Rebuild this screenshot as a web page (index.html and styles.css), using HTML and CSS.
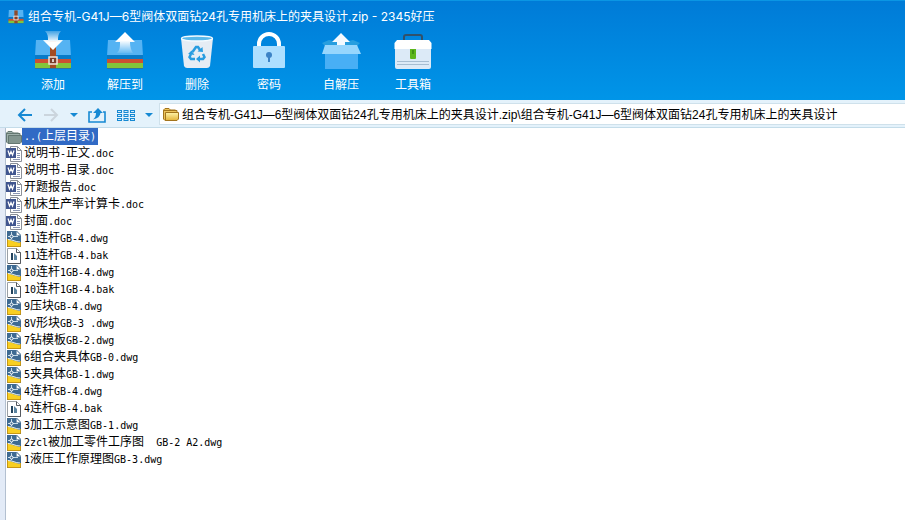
FILE: index.html
```html
<!DOCTYPE html>
<html lang="zh-CN">
<head>
<meta charset="utf-8">
<title>2345好压</title>
<link rel="stylesheet" href="styles.css">
</head>
<body>
<svg class="defs" aria-hidden="true">
  <defs>
    <linearGradient id="arrow" x1="0" y1="0" x2="0" y2="1"><stop offset="0" stop-color="#fff" stop-opacity=".25"/><stop offset=".6" stop-color="#fff"/></linearGradient>
    <linearGradient id="arrowUp" x1="0" y1="0" x2="0" y2="1"><stop offset=".4" stop-color="#fff"/><stop offset="1" stop-color="#fff" stop-opacity=".1"/></linearGradient>
    <linearGradient id="yellow" x1="0" y1="0" x2="0" y2="1"><stop offset="0" stop-color="#fff3a8"/><stop offset="1" stop-color="#e3b238"/></linearGradient>
    <symbol id="archive" viewBox="0 0 38 30" preserveAspectRatio="none">
      <path d="M2 0H36L37 16H1z" fill="#55b3f3"/><path d="M1 15H37V20H1z" fill="#087ac8"/>
      <path d="M1 19H37V24H1z" fill="#cc5033"/><path d="M1 23H37V28H1z" fill="#82c63b"/><path d="M1 28H37V29H1z" fill="#30739a"/>
    </symbol>
    <symbol id="doc" viewBox="0 0 16 16">
      <path d="M4.500 .5H11.500L15.500 4.500V15.500H4.500z" fill="#fff" stroke="#8c9099"/><path d="M11.500 .5V4.500H15.500" fill="none" stroke="#8c9099"/>
      <path d="M11 7.500H14M11 9.500H14M11 11.500H14M7 13.500H14" stroke="#8c97b5"/>
      <path d="M0 2H10V12H0z" fill="#40558f"/><path d="M2 4.500L3.500 9L5 5.500L6.500 9L8 4.500" fill="none" stroke="#fff" stroke-width="1.200"/>
    </symbol>
    <symbol id="dwg" viewBox="0 0 16 16">
      <path d="M1 0H11L15 4V16H1z" fill="#3e6a92"/>
      <path d="M2 9C6 9 8 11 14 12V15H2z" fill="#f8cf22"/><path d="M2 8.500C7 8.500 9 11 14 11" fill="none" stroke="#e6eff3"/>
      <path d="M1.500 8V15.500H14.500V11" fill="none" stroke="#c79713"/>
      <path d="M5.500 1V8M2 5.500H12" stroke="#c4dbea"/><circle cx="5.500" cy="5.500" r="1.500" fill="#3e6a92" stroke="#fff"/><path d="M10.500 .5V4.500H14.500z" fill="#fff" stroke="#7893aa" stroke-width=".5"/>
    </symbol>
    <symbol id="bak" viewBox="0 0 16 16">
      <path d="M1.500 .5H10.500L14.500 4.500V15.500H1.500z" fill="#fff" stroke="#9aa0a6"/><path d="M10.500 .5V4.500H14.500V15.500H2" fill="none" stroke="#55595f"/>
      <path d="M5 5H7V12H5z" fill="#23435d"/><path d="M8 5L11 8V12H8z" fill="#5c84a0"/>
    </symbol>
    <symbol id="folder" viewBox="0 0 16 16">
      <path d="M.5 4L2 2.500H6L7.500 4H12.500V6H.5z" class="folder-back"/><path d="M.5 13V4.500H14V13L12.500 14.500H2z" class="folder-back"/>
      <path d="M2.500 6.500H15.500V13L14 14.500H2.500z" class="folder-front"/>
    </symbol>
  </defs>
</svg>
<header class="banner">
  <h1 class="title">
    <svg class="app-icon" viewBox="0 0 38 34" preserveAspectRatio="none"><use href="#archive" width="38" height="34"/><path d="M15 1H23V32H15z" fill="#8e4b2c"/><path d="M14 15H24V24H14z" fill="#8a3a22" stroke="#fff" stroke-width="2"/></svg>
    <span>组合专机-G41J—6型阀体双面钻24孔专用机床上的夹具设计.zip - 2345好压</span>
  </h1>
  <nav class="tools" aria-label="工具栏">
    <button class="tool"><svg viewBox="0 0 40 40"><use href="#archive" x="1" y="9" width="38" height="30"/><path d="M17 10H23V37H17z" fill="#a44c22"/><path d="M16 26H24V33H16z" fill="#793d29" stroke="#f3e5db" stroke-width="1.500"/><path d="M20 28V31" stroke="#fff" stroke-width="1.500"/><path d="M12 0H28C25 3 25 6 25 9H30L20 19L10 9H15C15 6 15 3 12 0z" fill="url(#arrow)"/></svg><span>添加</span></button>
    <button class="tool"><svg viewBox="0 0 40 40"><use href="#archive" x="1" y="9" width="38" height="30"/><path d="M20 1L30 11H25C25 16 26 19 28 22H12C15 19 15 16 15 11H10z" fill="url(#arrowUp)"/></svg><span>解压到</span></button>
    <button class="tool"><svg viewBox="0 0 40 40"><path d="M4 7H36L33 35Q32 37 30 37H10Q8 37 7 35z" fill="#e5ecf4"/><ellipse cx="20" cy="7.500" rx="15.500" ry="2.500" fill="#59b8ea" stroke="#f5fbff" stroke-width="1.300"/><path d="M15.500 21L19 16H21L23 19M26 23L27.500 26L26 28H22M18 28H14L12.500 26L14 23" fill="none" stroke="#279ce0" stroke-width="2.500"/><path d="M20.500 20.500L26 21L25.500 16zM23 24.500V31.500L19 28zM11 23L14.500 19.500L17.500 24z" fill="#279ce0"/></svg><span>删除</span></button>
    <button class="tool"><svg viewBox="0 0 40 40"><path d="M10 18V13A10 10 0 0 1 30 13V18" fill="none" stroke="#fff" stroke-width="4"/><rect x="4" y="15" width="32" height="22" rx="1" fill="#addfff"/><circle cx="20" cy="24" r="3" fill="#3c83c6"/><path d="M20 25V31" stroke="#3c83c6" stroke-width="2"/></svg><span>密码</span></button>
    <button class="tool"><svg viewBox="0 0 40 40"><path d="M1 12L8 9L20 12L32 9L39 12L35 16H5z" fill="#279edf"/><path d="M20 2L29 11H24V18H16V11H11z" fill="#f4faff"/><path d="M4 22H37V38H4z" fill="#48aff5"/><path d="M4 14H36L40 23H1z" fill="#97d6fd"/></svg><span>自解压</span></button>
    <button class="tool"><svg viewBox="0 0 40 40"><path d="M11 9V6Q11 4 13 4H27Q29 4 29 6V9" fill="none" stroke="#31516b" stroke-width="2"/><path d="M2 17H38V36Q38 38 36 38H4Q2 38 2 36z" fill="#dceaf7"/><path d="M4 9H36L38.500 12V18H1.500V12z" fill="#fff"/><path d="M17 18H23V27Q23 28 22 28H18Q17 28 17 27z" fill="#5db61e"/><path d="M20 19V23" stroke="#27700b"/><path d="M4 30.500H36M4 33.500H36" stroke="#a6bdd1"/></svg><span>工具箱</span></button>
  </nav>
</header>
<form class="navbar">
  <div class="nav-buttons">
    <button type="button" aria-label="后退"><svg width="16" height="16" viewBox="0 0 16 16"><path d="M15 8H2M8 2L2 8L8 14" fill="none" stroke="#1689d3" stroke-width="2"/></svg></button>
    <button type="button" aria-label="前进"><svg width="16" height="16" viewBox="0 0 16 16"><path d="M1 8H14M8 2L14 8L8 14" fill="none" stroke="#cbd5dd" stroke-width="2"/></svg></button>
    <button type="button" aria-label="历史"><svg width="8" height="16" viewBox="0 0 8 16"><path d="M0 6H8L4 10z" fill="#1689d3"/></svg></button>
    <button type="button" aria-label="向上"><svg width="18" height="16" viewBox="0 0 18 16"><path d="M4 5H1V15H17V5H15" fill="none" stroke="#1689d3" stroke-width="1.600"/><path d="M10 1L15 6H12.500Q12 11 5 12.500Q8 10 8 6H5z" fill="#1689d3"/></svg></button>
    <button type="button" aria-label="视图"><svg width="18" height="16" viewBox="0 0 18 16"><path d="M0 4.500H18M0 8.500H18M0 12.500H18" stroke="#1689d3" stroke-width="3" stroke-dasharray="5 1.500"/><path d="M1 4.500H18M1 8.500H18M1 12.500H18" stroke="#d9eefb" stroke-dasharray="3 3.500"/></svg></button>
    <button type="button" aria-label="选择视图"><svg width="8" height="16" viewBox="0 0 8 16"><path d="M0 6H8L4 10z" fill="#1689d3"/></svg></button>
  </div>
  <label class="address"><svg class="folder" viewBox="0 0 16 16"><use href="#folder"/></svg><input type="text" aria-label="地址" value="组合专机-G41J—6型阀体双面钻24孔专用机床上的夹具设计.zip\组合专机-G41J—6型阀体双面钻24孔专用机床上的夹具设计"></label>
</form>
<main class="files">
  <ul>
    <li class="selected"><svg class="folder gray"><use href="#folder"/></svg><span><i>..(</i>上层目录<i>)</i></span></li>
    <li><svg><use href="#doc"/></svg><span>说明书<i>-</i>正文<i>.doc</i></span></li>
    <li><svg><use href="#doc"/></svg><span>说明书<i>-</i>目录<i>.doc</i></span></li>
    <li><svg><use href="#doc"/></svg><span>开题报告<i>.doc</i></span></li>
    <li><svg><use href="#doc"/></svg><span>机床生产率计算卡<i>.doc</i></span></li>
    <li><svg><use href="#doc"/></svg><span>封面<i>.doc</i></span></li>
    <li><svg><use href="#dwg"/></svg><span><i>11</i>连杆<i>GB-4.dwg</i></span></li>
    <li><svg><use href="#bak"/></svg><span><i>11</i>连杆<i>GB-4.bak</i></span></li>
    <li><svg><use href="#dwg"/></svg><span><i>10</i>连杆<i>1GB-4.dwg</i></span></li>
    <li><svg><use href="#bak"/></svg><span><i>10</i>连杆<i>1GB-4.bak</i></span></li>
    <li><svg><use href="#dwg"/></svg><span><i>9</i>压块<i>GB-4.dwg</i></span></li>
    <li><svg><use href="#dwg"/></svg><span><i>8V</i>形块<i>GB-3 .dwg</i></span></li>
    <li><svg><use href="#dwg"/></svg><span><i>7</i>钻模板<i>GB-2.dwg</i></span></li>
    <li><svg><use href="#dwg"/></svg><span><i>6</i>组合夹具体<i>GB-0.dwg</i></span></li>
    <li><svg><use href="#dwg"/></svg><span><i>5</i>夹具体<i>GB-1.dwg</i></span></li>
    <li><svg><use href="#dwg"/></svg><span><i>4</i>连杆<i>GB-4.dwg</i></span></li>
    <li><svg><use href="#bak"/></svg><span><i>4</i>连杆<i>GB-4.bak</i></span></li>
    <li><svg><use href="#dwg"/></svg><span><i>3</i>加工示意图<i>GB-1.dwg</i></span></li>
    <li><svg><use href="#dwg"/></svg><span><i>2zcl</i>被加工零件工序图<i>  GB-2 A2.dwg</i></span></li>
    <li><svg><use href="#dwg"/></svg><span><i>1</i>液压工作原理图<i>GB-3.dwg</i></span></li>
  </ul>
</main>
</body>
</html>
```
FILE: styles.css
```css
* { box-sizing: border-box; }
body {
  margin: 0;
  min-height: 100vh;
  display: flex;
  flex-direction: column;
  background: #fff;
  font: 12px/16px "Noto Sans", "Noto Sans CJK SC", sans-serif;
}
button { border: 0; padding: 0; background: none; font: inherit; color: inherit; }
svg { display: block; flex: none; }
.defs { position: absolute; width: 0; height: 0; }

.banner {
  padding-top: 8px;
  height: 100px;
  color: #fff;
  background: linear-gradient(#007bd7, #0095e8);
  border-top: 1px solid #0b96e4;
}
.title {
  margin: 0;
  padding-left: 8px;
  display: flex;
  align-items: center;
  gap: 4px;
  font: 400 12px/16px Inter, "Noto Sans CJK SC", sans-serif;
  white-space: nowrap;
}
.app-icon { width: 16px; height: 14px; }
.tools { display: flex; padding: 6px 0 0 17px; }
.tool { width: 72px; display: flex; flex-direction: column; align-items: center; gap: 6px; }
.tool svg { width: 40px; height: 40px; }

.navbar {
  display: flex;
  align-items: center;
  height: 28px;
  background: #e4f2fb;
  border-bottom: 1px solid #c4dce9;
}
.nav-buttons { width: 159px; padding: 2px 6px 0 17px; display: flex; justify-content: space-between; }
.address {
  flex: 1;
  display: flex;
  align-items: center;
  gap: 3px;
  height: 22px;
  padding-left: 3px;
  background: #fff;
  border: solid #cfe1eb;
  border-width: 1px 0 1px 1px;
}
.address input {
  flex: 1;
  min-width: 0;
  border: 0;
  padding: 2px 0 0;
  outline: 0;
  background: none;
  color: #000;
  font: 12px/16px "Liberation Sans", "Noto Sans CJK SC", sans-serif;
}
.folder { width: 16px; height: 16px; --back: #edc35b; --front: url(#yellow); --edge: #a2741d; }
.folder.gray { --back: #9fb0ab; --front: #82958f; --edge: #647771; }
.folder-back { fill: var(--back); stroke: var(--edge); }
.folder-front { fill: var(--front); stroke: var(--edge); }

.files { flex: 1; display: flex; border-left: 5px solid #e3ebf7; }
.files ul { flex: 1; margin: 0; padding: 0; list-style: none; border-left: 1px solid #b3c0d0; }
.files li { display: flex; align-items: center; height: 17px; }
.files li svg { width: 16px; height: 16px; }
.files li span {
  height: 17px;
  padding: 0 2px;
  color: #000;
  white-space: pre;
  font: 12px/14px "Noto Sans CJK SC", sans-serif;
}
.files i { font: 10px/10px "DejaVu Sans Mono", monospace; }
.files .selected span { background: #316ac5; color: #fff; }
```
